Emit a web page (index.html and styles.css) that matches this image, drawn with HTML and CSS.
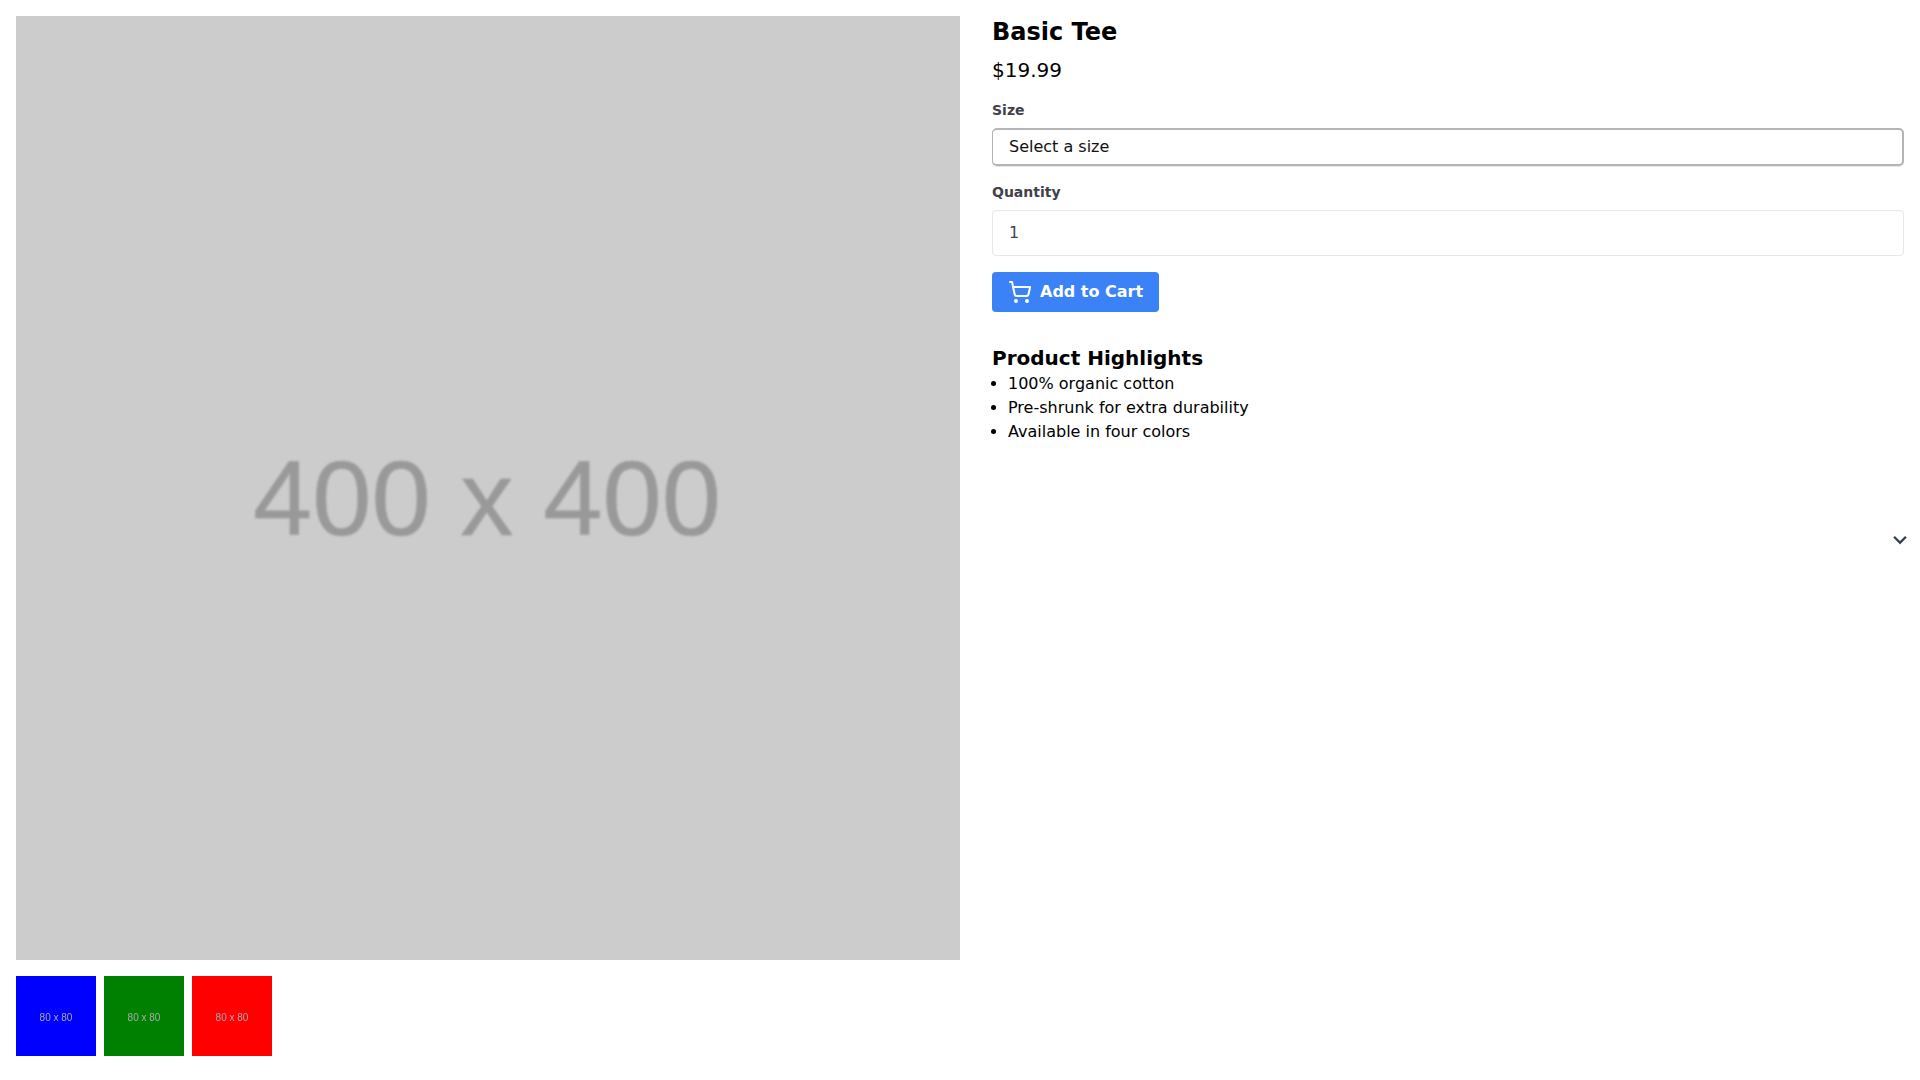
FILE: index.html
```html
<!DOCTYPE html>
<html lang="en">
<head>
<meta charset="utf-8">
<title>Basic Tee</title>
<link rel="stylesheet" href="styles.css">
</head>
<body>
<main class="product">
  <section class="gallery">
    <div class="hero"><span class="hero-text">400 x 400</span></div>
    <div class="thumbs">
      <div class="thumb thumb-blue"><span>80 x 80</span></div>
      <div class="thumb thumb-green"><span>80 x 80</span></div>
      <div class="thumb thumb-red"><span>80 x 80</span></div>
    </div>
  </section>
  <section class="details">
    <h1 class="title">Basic Tee</h1>
    <p class="price">$19.99</p>
    <label class="field-label" for="size">Size</label>
    <select class="size-select" id="size"><option>Select a size</option></select>
    <label class="field-label qty-label" for="qty">Quantity</label>
    <input class="qty-input" id="qty" type="number" value="1">
    <button class="add-btn" type="button">
      <svg class="cart-icon" viewBox="0 0 24 24" fill="none" stroke="currentColor" stroke-width="2" stroke-linecap="round" stroke-linejoin="round"><circle cx="8" cy="21" r="1"/><circle cx="19" cy="21" r="1"/><path d="M2.05 2.05h2l2.66 12.42a2 2 0 0 0 2 1.58h9.78a2 2 0 0 0 1.95-1.57l1.65-7.43H5.12"/></svg>
      <span class="add-label">Add to Cart</span>
    </button>
    <h2 class="highlights-title">Product Highlights</h2>
    <ul class="highlights">
      <li>100% organic cotton</li>
      <li>Pre-shrunk for extra durability</li>
      <li>Available in four colors</li>
    </ul>
  </section>
</main>
<svg class="chevron" viewBox="0 0 20 20" fill="currentColor"><path d="M9.293 12.95l.707.707L15.657 8l-1.414-1.414L10 10.828 5.757 6.586 4.343 8z"/></svg>
</body>
</html>
```
FILE: styles.css
```css
* { box-sizing: border-box; }
html, body { margin: 0; height: 100%; background: #fff; }
body { font-family: "DejaVu Sans", sans-serif; font-size: 16px; color: #000; position: relative; min-height: 1080px; }
.product { display: grid; grid-template-columns: 944px 1fr; gap: 32px; padding: 16px; }
.hero { width: 944px; height: 944px; padding-top: 22px; background: #ccc; display: flex; align-items: center; justify-content: center; }
.hero-text { font-family: "Liberation Sans", Arial, sans-serif; font-size: 106.5px; line-height: 1; color: #999; -webkit-text-stroke: .4px #999; filter: blur(.8px); margin-right: 2px; }
.thumbs { display: flex; gap: 8px; margin-top: 16px; }
.thumb { width: 80px; height: 80px; display: flex; align-items: center; justify-content: center; font-family: "Liberation Sans", Arial, sans-serif; font-size: 10px; color: #aaa; padding-top: 3px; }
.thumb span { filter: blur(.25px); }
.thumb-blue { background: #00f; }
.thumb-green { background: #008000; }
.thumb-red { background: #f00; }
.title { margin: 0 0 8px; font-size: 24px; line-height: 32px; font-weight: 700; }
.price { margin: 0 0 16px; font-size: 20px; line-height: 28px; }
.field-label { display: block; font-size: 14px; line-height: 20px; font-weight: 700; color: #3f424a; margin-bottom: 8px; }
.size-select { display: block; width: 100%; height: 38px; appearance: none; -webkit-appearance: none; background: #fff; border: 1px solid #b4b4b8; border-width: 2px 2px 2px 1px; border-radius: 5px; padding: 0 16px 2px; font: 16px "DejaVu Sans", sans-serif; color: #111; box-shadow: 0 1px 0 #e5e7eb; }
.qty-label { margin-top: 16px; }
.qty-input { display: block; width: 100%; height: 46px; border: 1px solid #e5e7eb; border-radius: 4px; padding: 0 16px 1px; font: 16px "DejaVu Sans", sans-serif; color: #444; appearance: textfield; -moz-appearance: textfield; background: #fff; }
.add-btn { display: inline-flex; align-items: center; gap: 8px; height: 40px; margin-top: 16px; padding: 8px 16px; border: 0; border-radius: 4px; background: #3b82f6; color: #fff; font: 700 16px "DejaVu Sans", sans-serif; }
.add-label { margin-bottom: 2px; }
.cart-icon { width: 24px; height: 24px; flex: none; }
.highlights-title { margin: 32px 0 0; font-size: 20px; line-height: 28px; font-weight: 700; }
.highlights { margin: 0; padding-left: 16px; }
.highlights li { line-height: 24px; }
.chevron { position: absolute; right: 8px; top: 50%; width: 24px; height: 24px; transform: translateY(-50%); color: #374151; }
```
